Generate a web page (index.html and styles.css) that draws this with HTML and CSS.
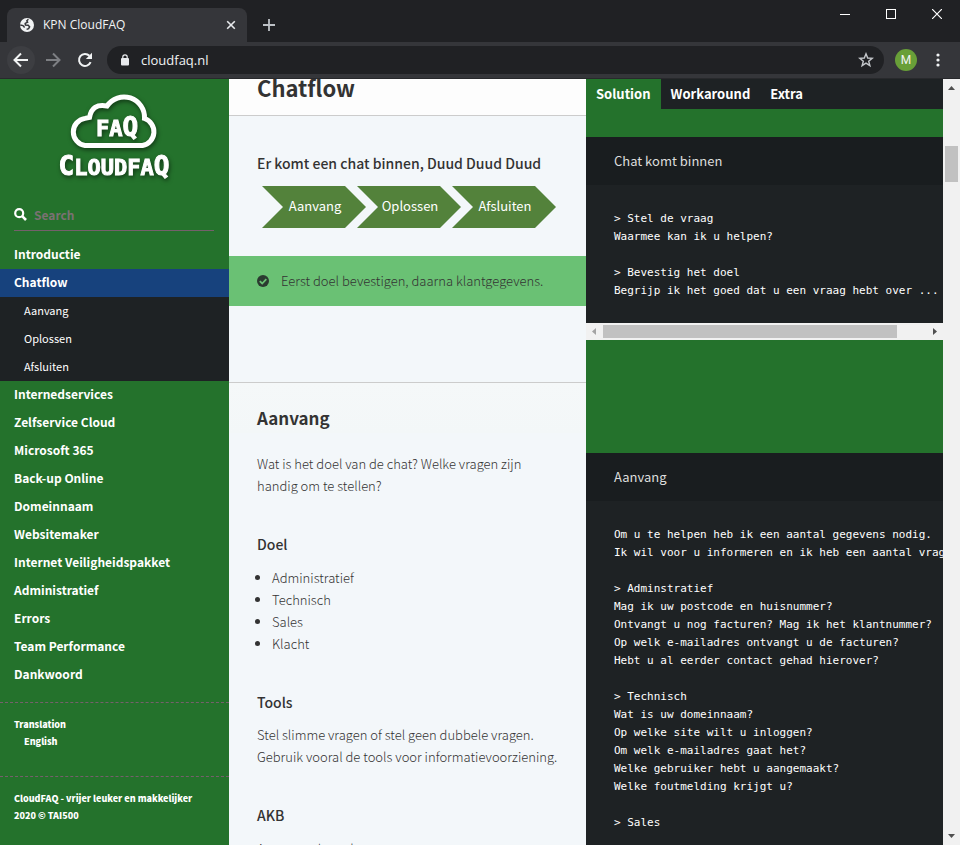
FILE: index.html
```html
<!DOCTYPE html>
<html lang="nl">
<head>
<meta charset="utf-8">
<title>KPN CloudFAQ</title>
<link rel="stylesheet" href="styles.css">
</head>
<body>
<header class="browser">
  <div class="tabstrip">
    <div class="tab">
      <svg class="globe" viewBox="0 0 16 16" width="16" height="16"><circle cx="8" cy="8" r="7" fill="#f1f3f4"/><path d="M9.400 2.200 7.800 3.800 8.600 5.200 6.200 6.400 6.400 8 9.200 8.200 10.600 9.800 9.600 11.600 7.600 12.400M1.200 8 4 8.600 5.600 10.400" fill="none" stroke="#35363a" stroke-width="1.500"/></svg>
      <span class="tab-title">KPN CloudFAQ</span>
      <button class="icon-btn" aria-label="Tabblad sluiten"><svg viewBox="0 0 10 10" width="10" height="10"><path d="M1.2 1.2 8.8 8.8M8.8 1.2 1.2 8.8" stroke="#e8eaed" stroke-width="1.6"/></svg></button>
    </div>
    <button class="icon-btn new-tab" aria-label="Nieuw tabblad"><svg viewBox="0 0 12 12" width="12" height="12"><path d="M6 0V12M0 6H12" stroke="#bdc1c6" stroke-width="1.8"/></svg></button>
    <div class="window-controls">
      <button class="icon-btn" aria-label="Minimaliseren"><svg viewBox="0 0 10 10" width="10" height="10"><path d="M0 5.5H10" stroke="#fff"/></svg></button>
      <button class="icon-btn" aria-label="Maximaliseren"><svg viewBox="0 0 10 10" width="10" height="10"><rect x=".5" y=".5" width="9" height="9" fill="none" stroke="#fff"/></svg></button>
      <button class="icon-btn" aria-label="Sluiten"><svg viewBox="0 0 10 10" width="10" height="10"><path d="M0 0 10 10M10 0 0 10" stroke="#fff" stroke-width="1.2"/></svg></button>
    </div>
  </div>
  <div class="toolbar">
    <button class="icon-btn nav-btn back" aria-label="Terug"><svg viewBox="0 0 16 16" width="16" height="16"><path d="M15 8H2M8 1.5 1.5 8 8 14.5" fill="none" stroke="#f1f3f4" stroke-width="2"/></svg></button>
    <button class="icon-btn nav-btn" aria-label="Vooruit"><svg viewBox="0 0 16 16" width="16" height="16"><path d="M1 8H14M8 1.5 14.5 8 8 14.5" fill="none" stroke="#7d7f83" stroke-width="2"/></svg></button>
    <button class="icon-btn nav-btn" aria-label="Vernieuwen"><svg viewBox="0 0 16 16" width="16" height="16"><path d="M13.6 10.2A6 6 0 1 1 12.4 3.8" fill="none" stroke="#f1f3f4" stroke-width="2"/><path d="M15 .8V7H8.8Z" fill="#f1f3f4"/></svg></button>
    <div class="omnibox">
      <svg viewBox="0 0 8 12" width="8" height="12"><rect y="4" width="8" height="7.5" rx="1" fill="#e8eaed"/><path d="M1.8 4.5V3a2.2 2.2 0 0 1 4.4 0V4.5" fill="none" stroke="#e8eaed" stroke-width="1.2"/></svg>
      <input class="address" type="text" value="cloudfaq.nl" aria-label="Adres">
      <button class="icon-btn" aria-label="Bladwijzer"><svg viewBox="0 0 16 16" width="16" height="16"><path d="M8 1.8 9.7 6 14.2 6.3 10.7 9.2 11.9 13.7 8 11.2 4.1 13.7 5.3 9.2 1.8 6.3 6.3 6Z" fill="none" stroke="#c4c7cb" stroke-width="1.4"/></svg></button>
    </div>
    <button class="avatar">M</button>
    <button class="icon-btn menu" aria-label="Menu"><svg viewBox="0 0 4 14" width="4" height="14"><g fill="#f1f3f4"><circle cx="2" cy="2" r="1.6"/><circle cx="2" cy="7" r="1.6"/><circle cx="2" cy="12" r="1.6"/></g></svg></button>
  </div>
</header>
<div class="page">
  <aside class="sidebar">
    <svg class="logo" viewBox="0 0 130 106" width="130" height="106" role="img" aria-label="CloudFAQ">
      <g class="logo-art">
        <path d="M35 64.500A13.700 13.700 0 0 1 35 37.400L39.500 36.500Q42 22 57 25A20.500 20.500 0 0 1 94.500 37.500A14 14 0 0 1 92.500 64.500Z" fill="none" stroke="#fff" stroke-width="5"/>
        <text class="logo-word" x="67" y="55" text-anchor="middle"><tspan class="logo-small">FA</tspan><tspan class="logo-big">Q</tspan></text>
        <text class="logo-word" x="64" y="94" text-anchor="middle"><tspan class="logo-big">C</tspan><tspan class="logo-small">LOUDFA</tspan><tspan class="logo-big">Q</tspan></text>
      </g>
    </svg>
    <label class="search">
      <svg viewBox="0 0 13 13" width="13" height="13"><circle cx="5.200" cy="5.200" r="4" fill="none" stroke="#fff" stroke-width="2.200"/><path d="M8.200 8.200 12 12" stroke="#fff" stroke-width="2.600"/></svg>
      <input type="text" placeholder="Search" aria-label="Search">
    </label>
    <nav class="toc">
      <a href="#">Introductie</a>
      <a href="#" class="active">Chatflow</a>
      <div class="sub">
        <a href="#">Aanvang</a>
        <a href="#">Oplossen</a>
        <a href="#">Afsluiten</a>
      </div>
      <a href="#">Internedservices</a>
      <a href="#">Zelfservice Cloud</a>
      <a href="#">Microsoft 365</a>
      <a href="#">Back-up Online</a>
      <a href="#">Domeinnaam</a>
      <a href="#">Websitemaker</a>
      <a href="#">Internet Veiligheidspakket</a>
      <a href="#">Administratief</a>
      <a href="#">Errors</a>
      <a href="#">Team Performance</a>
      <a href="#">Dankwoord</a>
    </nav>
    <div class="toc-footer">
      <div>Translation</div>
      <a href="#" class="lang">English</a>
    </div>
    <div class="toc-footer">
      <div>CloudFAQ - vrijer leuker en makkelijker</div>
      <div>2020 © TAI500</div>
    </div>
  </aside>
  <main class="content">
    <h1>Chatflow</h1>
    <section class="intro">
      <h3>Er komt een chat binnen, Duud Duud Duud</h3>
      <svg class="steps" viewBox="0 0 296 44" width="296" height="44">
        <g fill="#53823b">
          <path d="M1 1H84L105 22 84 43H1L22 22Z"/>
          <path d="M96 1H179L200 22 179 43H96L117 22Z"/>
          <path d="M191 1H274L295 22 274 43H191L212 22Z"/>
        </g>
        <g class="step-text" text-anchor="middle">
          <text x="54" y="26">Aanvang</text>
          <text x="149" y="26">Oplossen</text>
          <text x="244" y="26">Afsluiten</text>
        </g>
      </svg>
      <div class="notice">
        <svg viewBox="0 0 12 12" width="12" height="12"><circle cx="6" cy="6" r="6" fill="#2b3a30"/><path d="M2.800 6.200 5.200 8.500 9.300 4.200" fill="none" stroke="#6ac174" stroke-width="1.800"/></svg>
        Eerst doel bevestigen, daarna klantgegevens.
      </div>
    </section>
    <h2>Aanvang</h2>
    <p>Wat is het doel van de chat? Welke vragen zijn handig om te stellen?</p>
    <h3>Doel</h3>
    <ul>
      <li>Administratief</li>
      <li>Technisch</li>
      <li>Sales</li>
      <li>Klacht</li>
    </ul>
    <h3>Tools</h3>
    <p>Stel slimme vragen of stel geen dubbele vragen. Gebruik vooral de tools voor informatievoorziening.</p>
    <h3>AKB</h3>
    <ul>
      <li class="plain">Aangeven hoe al</li>
    </ul>
  </main>
  <section class="code">
    <div class="lang-tabs">
      <a href="#" class="active">Solution</a>
      <a href="#">Workaround</a>
      <a href="#">Extra</a>
    </div>
    <h4>Chat komt binnen</h4>
    <pre>&gt; Stel de vraag
Waarmee kan ik u helpen?

&gt; Bevestig het doel
Begrijp ik het goed dat u een vraag hebt over ...</pre>
    <div class="hscroll">
      <svg viewBox="0 0 17 17" width="17" height="17"><path d="M10 5V12L6 8.500Z" fill="#a3a3a3"/></svg>
      <div class="htrack"><div class="hthumb"></div></div>
      <svg viewBox="0 0 17 17" width="17" height="17"><path d="M7 5V12L11 8.500Z" fill="#505050"/></svg>
    </div>
    <h4 class="second">Aanvang</h4>
    <pre>Om u te helpen heb ik een aantal gegevens nodig.
Ik wil voor u informeren en ik heb een aantal vragen

&gt; Adminstratief
Mag ik uw postcode en huisnummer?
Ontvangt u nog facturen? Mag ik het klantnummer?
Op welk e-mailadres ontvangt u de facturen?
Hebt u al eerder contact gehad hierover?

&gt; Technisch
Wat is uw domeinnaam?
Op welke site wilt u inloggen?
Om welk e-mailadres gaat het?
Welke gebruiker hebt u aangemaakt?
Welke foutmelding krijgt u?

&gt; Sales</pre>
  </section>
  <div class="vscroll">
    <svg viewBox="0 0 17 17" width="17" height="17"><path d="M5 11H12L8.500 7Z" fill="#505050"/></svg>
    <div class="vtrack"><div class="vthumb"></div></div>
    <svg viewBox="0 0 17 17" width="17" height="17"><path d="M5 6H12L8.500 10Z" fill="#505050"/></svg>
  </div>
</div>
</body>
</html>
```
FILE: styles.css
```css
* { box-sizing: border-box; }
body {
  margin: 0;
  height: 100vh;
  display: flex;
  flex-direction: column;
  overflow: hidden;
  font: 13px/22px "Noto Sans CJK SC", sans-serif;
  color: #333;
}
a { color: inherit; text-decoration: none; }
button, input { font: inherit; color: inherit; border: 0; padding: 0; background: none; }
svg { display: block; flex: none; }
.icon-btn { display: flex; align-items: center; justify-content: center; }

/* Browser frame */
.browser { background: #202124; color: #f1f3f4; flex: none; }
.tabstrip { display: flex; height: 42px; padding-left: 7px; }
.tab {
  display: flex;
  align-items: center;
  width: 240px;
  height: 34px;
  margin-top: 8px;
  padding: 0 11px 0 12px;
  gap: 8px;
  background: #35363a;
  border-radius: 8px 8px 0 0;
}
.tab-title { flex: 1; font: 12px/16px "Open Sans", sans-serif; }
.new-tab { width: 44px; padding-top: 8px; }
.window-controls { display: flex; margin-left: auto; height: 28px; }
.window-controls button { width: 46px; }
.toolbar {
  display: flex;
  align-items: center;
  height: 37px;
  padding: 0 14px 0 7px;
  background: #35363a;
  border-bottom: 1px solid #28292c;
}
.nav-btn { width: 28px; height: 28px; margin-right: 4px; border-radius: 50%; }
.back { background: #3d3e42; }
.omnibox {
  flex: 1;
  display: flex;
  align-items: center;
  height: 28px;
  margin-left: 4px;
  padding: 0 10px 0 14px;
  border-radius: 14px;
  background: #202124;
}
.address { flex: 1; min-width: 0; margin-left: 12px; font: 13px/20px "Open Sans", sans-serif; }
.avatar {
  width: 22px;
  height: 22px;
  margin-left: 11px;
  border-radius: 50%;
  background: #689f38;
  font: 12px/22px Roboto, sans-serif;
}
.menu { width: 16px; margin-left: 13px; }

/* Page */
.page {
  flex: 1;
  min-height: 0;
  display: grid;
  grid-template-columns: 229px 1fr 1fr 17px;
  grid-template-rows: 100%;
}
.page > * { min-width: 0; overflow: hidden; }

.sidebar { background: #24722c; color: #fff; font-size: 12px; font-weight: bold; }
.logo { margin: 2px auto 0 50px; }
.logo-art { filter: drop-shadow(1px 2px 2px rgba(0, 0, 0, .5)); }
.logo-word { font-family: "DejaVu Sans Mono", monospace; font-weight: bold; fill: #fff; stroke: #fff; stroke-width: 1px; }
.logo-small { font-size: 22px; }
.logo-big { font-size: 26px; }
.search {
  display: flex;
  align-items: center;
  gap: 7px;
  height: 28px;
  margin: 16px 15px 10px 14px;
  padding-bottom: 4px;
  border-bottom: 1px solid #75606b;
}
.search input { flex: 1; min-width: 0; height: 22px; }
.search input::placeholder { color: #7a7172; opacity: 1; }
.toc { margin-bottom: 13px; }
.toc a { display: block; padding: 0 14px 2px; line-height: 26px; }
.toc .active { background: #17427d; }
.sub { background: #1e2224; font-size: 11px; font-weight: normal; }
.toc .sub a { padding-left: 24px; }
.toc-footer {
  min-height: 74px;
  padding: 13px 14px 0;
  border-top: 1px dashed #75606b;
  font-size: 9px;
  font-weight: 900;
  line-height: 17px;
}
.lang { display: block; padding-left: 10px; }

.content { background: #f3f7fa; }
h1, h2, h3, h4, p { margin: 0; }
h1 {
  height: 37px;
  padding: 0 28px;
  border-bottom: 1px solid #ccc;
  background: #fdfdfd;
  font-size: 22px;
  line-height: 16px;
}
.content h3 { margin: 36px 28px 11px; font-size: 14px; font-weight: 500; line-height: 22px; }
.content p { margin: 10px 28px; font-weight: 300; }
.content .intro { height: 266px; padding-top: 1px; }
.content .intro h3 { margin-top: 35px; }
.steps { margin: 0 32px 27px; }
.step-text { fill: #fff; font-size: 13px; }
.notice {
  display: flex;
  align-items: center;
  gap: 12px;
  height: 50px;
  padding: 0 28px;
  background: #6ac174;
  font-weight: 300;
}
h2 {
  height: 51px;
  padding: 0 28px;
  border-top: 1px solid #ccc;
  background: linear-gradient(#f5f8f9, #f3f7f8);
  font-size: 17px;
  line-height: 70px;
}
.content h2 + p { margin-top: 20px; }
.content ul { margin: 12px 28px; padding-left: 15px; font-weight: 300; }
.content .plain { margin-left: -15px; list-style: none; }

.code { background: #24722c; color: #fff; }
.lang-tabs {
  display: flex;
  height: 30px;
  margin-bottom: 28px;
  background: #1e2224;
  font-weight: bold;
  line-height: 30px;
}
.lang-tabs a { padding: 0 10px; }
.lang-tabs .active { background: #24722c; }
h4 {
  padding: 0 28px;
  background: #191d1f;
  color: #ddd;
  font-size: 13px;
  font-weight: normal;
  line-height: 48px;
}
.second { margin-top: 113px; }
pre {
  margin: 0;
  padding: 25px 28px 23px;
  overflow: hidden;
  background: #1e2224;
  font: 11px/18px "DejaVu Sans Mono", monospace;
}
.hscroll { display: flex; height: 17px; background: #f1f1f1; }
.htrack { flex: 1; padding: 2px 0; }
.hthumb { width: 91%; height: 13px; background: #c1c1c1; }
.vscroll { display: flex; flex-direction: column; background: #f1f1f1; }
.vtrack { flex: 1; padding: 50px 2px 0; }
.vthumb { height: 36px; background: #c1c1c1; }
```
